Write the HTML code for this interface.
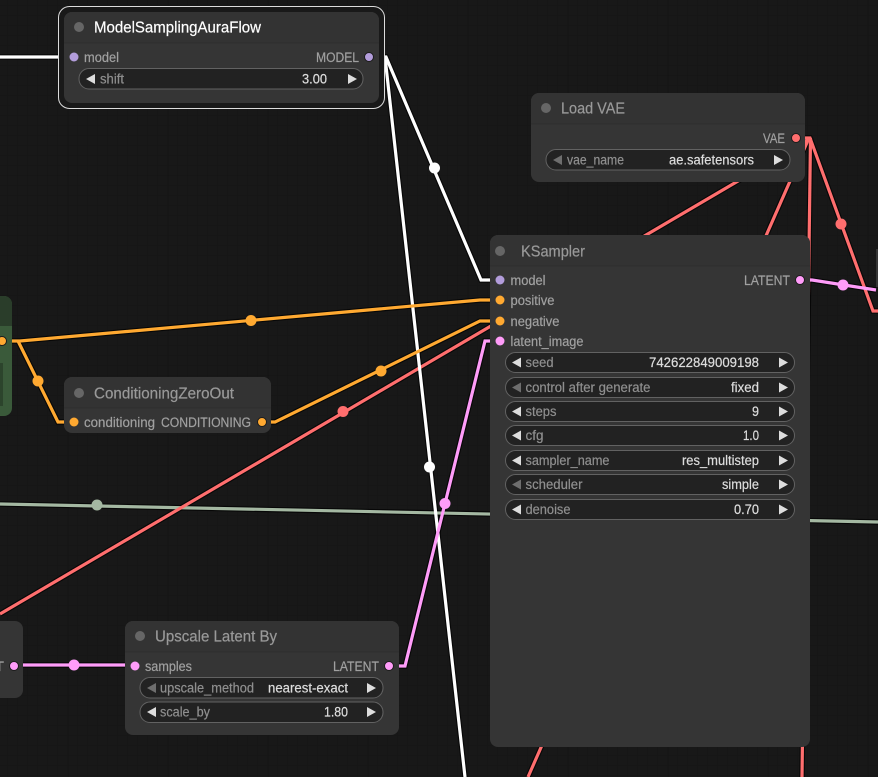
<!DOCTYPE html>
<html><head><meta charset="utf-8">
<style>
html,body{margin:0;padding:0;background:#181818;width:878px;height:777px;overflow:hidden}
svg{display:block;position:absolute;left:0;top:0}
text{font-family:"Liberation Sans",sans-serif;font-size:13.5px;stroke-width:.2px}
.t{font-size:15.5px;fill:#999;stroke:#999}
.l{fill:#a0a0a0;stroke:#a0a0a0}
.w{fill:#8f8f8f;stroke:#8f8f8f}
.v{fill:#dddddd;stroke:#dddddd}
.wb{fill:#222;stroke:#626262;stroke-width:1}
.n{fill:#353535}
.h{fill:#333}
.d{stroke:#2e2e2e;stroke-width:1}
.a{fill:#ddd}
.ad{fill:#6e6e6e}
.o{fill:none;stroke:#000;stroke-opacity:.7;stroke-width:5.5;stroke-linejoin:miter}
.k{fill:none;stroke-width:3.2;stroke-linejoin:miter}
</style></head><body>
<svg width="878" height="777" viewBox="0 0 878 777" xmlns="http://www.w3.org/2000/svg">
<defs>
<pattern id="g" x="7" y="5" width="10" height="10" patternUnits="userSpaceOnUse"><path d="M0 0V10M0 0H10" stroke="#151515" stroke-width="1" fill="none"/></pattern>
<pattern id="G" x="68" y="75" width="100" height="100" patternUnits="userSpaceOnUse"><path d="M0 0V100M0 0H100" stroke="#131313" stroke-width="1" fill="none"/></pattern>
</defs>
<rect width="878" height="777" fill="#181818"/>
<rect width="878" height="777" fill="url(#g)"/>
<rect width="878" height="777" fill="url(#G)"/>

<!-- link outlines -->
<g class="o">
<path d="M0 504L878 522"/>
<path d="M0 57H64"/>
<path d="M379 57H386L481 280H490"/>
<path d="M385 57L465 777"/>
<path d="M2 341H20L480 300H490"/>
<path d="M18 341L58 422H64"/>
<path d="M262 422H275L480 321H490"/>
<path d="M0 614L808 140"/>
<path d="M809 138L528 777"/>
<path d="M810.500 138L802 777"/>
<path d="M800 138H810L873 311H878"/>
<path d="M800 280H812L876 290"/>
<path d="M14 665H135"/>
<path d="M389 666H405L485 341H500"/>
</g>
<!-- links -->
<g class="k">
<path stroke="#a4b8a2" d="M0 504L878 522"/>
<path stroke="#ff6e6e" d="M0 614L808 140"/>
<path stroke="#ff6e6e" d="M809 138L528 777"/>
<path stroke="#ff6e6e" d="M810.500 138L802 777"/>
<path stroke="#ff6e6e" d="M800 138H810L873 311H878"/>
<path stroke="#ffffff" d="M0 57H64"/>
<path stroke="#ffffff" d="M379 57H386L481 280H490"/>
<path stroke="#ffffff" d="M385 57L465 777"/>
<path stroke="#ffa931" d="M2 341H20L480 300H490"/>
<path stroke="#ffa931" d="M18 341L58 422H64"/>
<path stroke="#ffa931" d="M262 422H275L480 321H490"/>
<path stroke="#ff9cf9" d="M800 280H812L876 290"/>
<path stroke="#ff9cf9" d="M14 665H135"/>
<path stroke="#ff9cf9" d="M389 666H405L485 341H500"/>
</g>
<!-- link midpoints -->
<circle cx="97" cy="505" r="5.500" fill="#a4b8a2"/>
<circle cx="434.500" cy="168" r="5.500" fill="#fff"/>
<circle cx="429.500" cy="467" r="5.500" fill="#fff"/>
<circle cx="251" cy="320.500" r="5.500" fill="#ffa931"/>
<circle cx="38" cy="381" r="5.500" fill="#ffa931"/>
<circle cx="381" cy="371" r="5.500" fill="#ffa931"/>
<circle cx="343" cy="411.500" r="5.500" fill="#ff6e6e"/>
<circle cx="841" cy="224" r="5.500" fill="#ff6e6e"/>
<circle cx="843" cy="285" r="5.500" fill="#ff9cf9"/>
<circle cx="74" cy="665" r="5.500" fill="#ff9cf9"/>
<circle cx="445" cy="503.500" r="5.500" fill="#ff9cf9"/>

<!-- left green node -->
<rect x="-20" y="296" width="32" height="120" rx="8" fill="#3a5a3a"/>
<path d="M-20 326V304a8 8 0 0 1 8-8H4a8 8 0 0 1 8 8V326Z" fill="#2a3d2a"/>
<rect x="-4" y="363" width="7" height="43" fill="#2c442c"/>
<circle cx="2" cy="341" r="4.500" fill="#ffa931" stroke="#1c1c1c" stroke-width="1"/>

<!-- left bottom node -->
<rect x="-20" y="621" width="43" height="77" rx="8" class="n"/>
<text x="-5" y="671" class="l" textLength="9" lengthAdjust="spacingAndGlyphs">T</text>
<circle cx="14" cy="666" r="4.500" fill="#ff9cf9" stroke="#1c1c1c" stroke-width="1"/>

<!-- right sliver -->
<rect x="876" y="249" width="10" height="38" class="n"/>

<!-- ModelSamplingAuraFlow -->
<rect x="58.500" y="6.500" width="326" height="102" rx="11" fill="#191919" stroke="#dcdcdc" stroke-width="1"/>
<rect x="64" y="12" width="315" height="91" rx="8" class="n"/>
<path d="M64 43V20a8 8 0 0 1 8-8H371a8 8 0 0 1 8 8V43Z" class="h"/>
<path d="M64 43H379" class="d"/>
<circle cx="79" cy="27" r="5" fill="#666"/>
<text x="94" y="32.500" class="t" style="fill:#fff;stroke:#fff" textLength="167" lengthAdjust="spacingAndGlyphs">ModelSamplingAuraFlow</text>
<circle cx="74" cy="57" r="4.500" fill="#b39ddb"/>
<text x="84" y="62" class="l" textLength="35" lengthAdjust="spacingAndGlyphs">model</text>
<text x="316" y="62" class="l" textLength="43" lengthAdjust="spacingAndGlyphs">MODEL</text>
<circle cx="369" cy="57" r="4.500" fill="#b39ddb" stroke="#1c1c1c" stroke-width="1"/>
<rect x="79" y="68.500" width="284" height="20.500" rx="10" class="wb"/>
<path d="M86 79L95 74V84Z" class="a"/><path d="M357 79L348 74V84Z" class="a"/>
<text x="100" y="83.500" class="w" textLength="24" lengthAdjust="spacingAndGlyphs">shift</text>
<text x="302" y="83.500" class="v" textLength="25" lengthAdjust="spacingAndGlyphs">3.00</text>

<!-- Load VAE -->
<rect x="531" y="93" width="274" height="89" rx="8" class="n"/>
<path d="M531 124V101a8 8 0 0 1 8-8H797a8 8 0 0 1 8 8V124Z" class="h"/>
<path d="M531 124H805" class="d"/>
<circle cx="546" cy="108" r="5" fill="#666"/>
<text x="561" y="113.500" class="t" textLength="64" lengthAdjust="spacingAndGlyphs">Load VAE</text>
<text x="763" y="143" class="l" textLength="22" lengthAdjust="spacingAndGlyphs">VAE</text>
<circle cx="796" cy="138" r="4.500" fill="#ff6e6e" stroke="#1c1c1c" stroke-width="1"/>
<rect x="546" y="149.500" width="244" height="20.500" rx="10" class="wb"/>
<path d="M553 160L562 155V165Z" class="ad"/><path d="M783 160L774 155V165Z" class="a"/>
<text x="567" y="164.500" class="w" textLength="57" lengthAdjust="spacingAndGlyphs">vae_name</text>
<text x="669" y="164.500" class="v" textLength="85" lengthAdjust="spacingAndGlyphs">ae.safetensors</text>

<!-- ConditioningZeroOut -->
<rect x="64" y="377" width="207" height="56" rx="8" class="n"/>
<path d="M64 408V385a8 8 0 0 1 8-8H263a8 8 0 0 1 8 8V408Z" class="h"/>
<path d="M64 408H271" class="d"/>
<circle cx="79" cy="393" r="5" fill="#666"/>
<text x="94" y="398.500" class="t" textLength="140" lengthAdjust="spacingAndGlyphs">ConditioningZeroOut</text>
<circle cx="74" cy="422" r="4.500" fill="#ffa931"/>
<text x="84" y="427" class="l" textLength="71" lengthAdjust="spacingAndGlyphs">conditioning</text>
<text x="161" y="427" class="l" textLength="90" lengthAdjust="spacingAndGlyphs">CONDITIONING</text>
<circle cx="262" cy="422" r="4.500" fill="#ffa931" stroke="#1c1c1c" stroke-width="1"/>

<!-- Upscale Latent By -->
<rect x="125" y="621" width="274" height="114" rx="8" class="n"/>
<path d="M125 652V629a8 8 0 0 1 8-8H391a8 8 0 0 1 8 8V652Z" class="h"/>
<path d="M125 652H399" class="d"/>
<circle cx="140" cy="636" r="5" fill="#666"/>
<text x="155" y="641.500" class="t" textLength="122" lengthAdjust="spacingAndGlyphs">Upscale Latent By</text>
<circle cx="135" cy="666" r="4.500" fill="#ff9cf9"/>
<text x="145" y="671" class="l" textLength="47" lengthAdjust="spacingAndGlyphs">samples</text>
<text x="333" y="671" class="l" textLength="46" lengthAdjust="spacingAndGlyphs">LATENT</text>
<circle cx="389" cy="666" r="4.500" fill="#ff9cf9" stroke="#1c1c1c" stroke-width="1"/>
<rect x="140" y="677.500" width="243" height="20.500" rx="10" class="wb"/>
<path d="M147 688L156 683V693Z" class="ad"/><path d="M376 688L367 683V693Z" class="a"/>
<text x="160" y="692.500" class="w" textLength="94" lengthAdjust="spacingAndGlyphs">upscale_method</text>
<text x="268" y="692.500" class="v" textLength="80" lengthAdjust="spacingAndGlyphs">nearest-exact</text>
<rect x="140" y="702" width="243" height="20.500" rx="10" class="wb"/>
<path d="M147 712L156 707V717Z" class="a"/><path d="M376 712L367 707V717Z" class="a"/>
<text x="160" y="716.500" class="w" textLength="50" lengthAdjust="spacingAndGlyphs">scale_by</text>
<text x="324" y="716.500" class="v" textLength="24" lengthAdjust="spacingAndGlyphs">1.80</text>

<!-- KSampler -->
<rect x="490" y="235" width="320" height="512" rx="8" class="n"/>
<path d="M490 266V243a8 8 0 0 1 8-8H802a8 8 0 0 1 8 8V266Z" class="h"/>
<path d="M490 266H810" class="d"/>
<circle cx="500" cy="251" r="5" fill="#666"/>
<text x="521" y="256.500" class="t" textLength="64" lengthAdjust="spacingAndGlyphs">KSampler</text>
<circle cx="500" cy="280" r="4.500" fill="#b39ddb"/>
<circle cx="500" cy="300" r="4.500" fill="#ffa931"/>
<circle cx="500" cy="321" r="4.500" fill="#ffa931"/>
<circle cx="500" cy="341" r="4.500" fill="#ff9cf9"/>
<circle cx="800" cy="280" r="4.500" fill="#ff9cf9" stroke="#1c1c1c" stroke-width="1"/>
<text x="510.500" y="285" class="l" textLength="35" lengthAdjust="spacingAndGlyphs">model</text>
<text x="510.500" y="305" class="l" textLength="44" lengthAdjust="spacingAndGlyphs">positive</text>
<text x="510.500" y="326" class="l" textLength="49" lengthAdjust="spacingAndGlyphs">negative</text>
<text x="510.500" y="346" class="l" textLength="73" lengthAdjust="spacingAndGlyphs">latent_image</text>
<text x="744" y="285" class="l" textLength="46" lengthAdjust="spacingAndGlyphs">LATENT</text>

<rect x="505.500" y="352.500" width="289" height="20" rx="10" class="wb"/>
<path d="M512 362.500L521 357.500V367.500Z" class="a"/><path d="M788 362.500L779 357.500V367.500Z" class="a"/>
<text x="525.500" y="367" class="w" textLength="28" lengthAdjust="spacingAndGlyphs">seed</text>
<text x="649" y="367" class="v" textLength="110" lengthAdjust="spacingAndGlyphs">742622849009198</text>

<rect x="505.500" y="377.500" width="289" height="20" rx="10" class="wb"/>
<path d="M512 387.500L521 382.500V392.500Z" class="ad"/><path d="M788 387.500L779 382.500V392.500Z" class="a"/>
<text x="525.500" y="392" class="w" textLength="125" lengthAdjust="spacingAndGlyphs">control after generate</text>
<text x="731" y="392" class="v" textLength="28" lengthAdjust="spacingAndGlyphs">fixed</text>

<rect x="505.500" y="401.500" width="289" height="20" rx="10" class="wb"/>
<path d="M512 411.500L521 406.500V416.500Z" class="a"/><path d="M788 411.500L779 406.500V416.500Z" class="a"/>
<text x="525.500" y="416" class="w" textLength="31" lengthAdjust="spacingAndGlyphs">steps</text>
<text x="752" y="416" class="v" textLength="7" lengthAdjust="spacingAndGlyphs">9</text>

<rect x="505.500" y="425.500" width="289" height="20" rx="10" class="wb"/>
<path d="M512 435.500L521 430.500V440.500Z" class="a"/><path d="M788 435.500L779 430.500V440.500Z" class="a"/>
<text x="525.500" y="440" class="w" textLength="18" lengthAdjust="spacingAndGlyphs">cfg</text>
<text x="743" y="440" class="v" textLength="16" lengthAdjust="spacingAndGlyphs">1.0</text>

<rect x="505.500" y="450.500" width="289" height="20" rx="10" class="wb"/>
<path d="M512 460.500L521 455.500V465.500Z" class="a"/><path d="M788 460.500L779 455.500V465.500Z" class="a"/>
<text x="525.500" y="465" class="w" textLength="84" lengthAdjust="spacingAndGlyphs">sampler_name</text>
<text x="682" y="465" class="v" textLength="77" lengthAdjust="spacingAndGlyphs">res_multistep</text>

<rect x="505.500" y="474.500" width="289" height="20" rx="10" class="wb"/>
<path d="M512 484.500L521 479.500V489.500Z" class="ad"/><path d="M788 484.500L779 479.500V489.500Z" class="a"/>
<text x="525.500" y="489" class="w" textLength="57" lengthAdjust="spacingAndGlyphs">scheduler</text>
<text x="722" y="489" class="v" textLength="37" lengthAdjust="spacingAndGlyphs">simple</text>

<rect x="505.500" y="499.500" width="289" height="20" rx="10" class="wb"/>
<path d="M512 509.500L521 504.500V514.500Z" class="a"/><path d="M788 509.500L779 504.500V514.500Z" class="a"/>
<text x="525.500" y="514" class="w" textLength="45" lengthAdjust="spacingAndGlyphs">denoise</text>
<text x="734" y="514" class="v" textLength="25" lengthAdjust="spacingAndGlyphs">0.70</text>
</svg>
</body></html>
